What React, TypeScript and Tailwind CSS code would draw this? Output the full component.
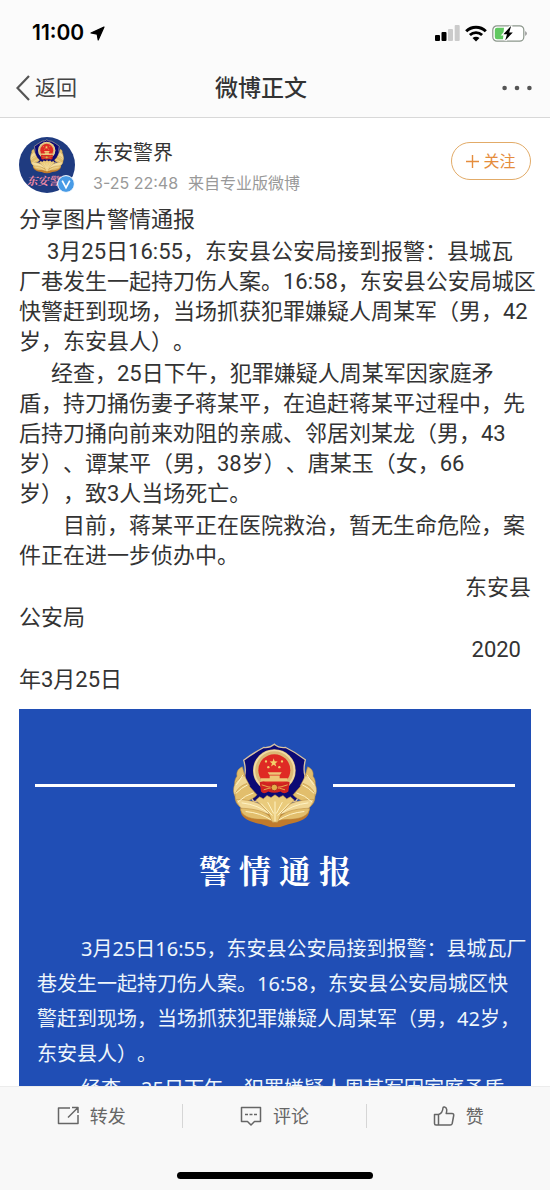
import type { ReactNode } from "react";

// ──────────────────────────────────────────────────────────────
// EMBLEM
// ──────────────────────────────────────────────────────────────
const LEAVES = [
  "M102 142 C88 148 84 158 86 170 C78 180 76 196 84 208 C92 194 106 184 110 170 Z",
  "M108 168 C92 174 78 190 76 206 C74 218 78 228 84 236 C98 218 118 216 124 198 Z",
  "M116 192 C96 198 80 214 80 232 C80 246 86 256 96 262 C110 244 136 240 146 226 Z",
  "M84 240 C90 264 106 276 132 280 C152 284 176 276 190 290 C178 254 132 240 84 240 Z",
  "M96 266 C98 284 114 294 138 298 C160 302 184 296 196 310 C186 276 142 268 96 266 Z",
];

function Wreath() {
  return (
    <g stroke="#b98a3c" strokeWidth="1.6" strokeLinejoin="round">
      {LEAVES.map((d, i) => (
        <path key={d} d={d} fill={i % 2 ? "#f0d694" : "#e2be6c"} />
      ))}
      <path d="M84 196 Q96 180 104 166 M82 222 Q100 204 118 196 M88 248 Q112 226 136 220 M100 250 Q150 256 184 284 M112 276 Q156 280 190 302" fill="none" stroke="#fff3c4" strokeWidth="3" />
    </g>
  );
}

function PoliceEmblem({ className }: { className: string }) {
  return (
    <svg viewBox="74 68 252 260" className={className} aria-hidden="true">
      <path d="M97 268 Q200 300 303 268 C306 296 276 308 240 314 Q200 332 160 314 C124 308 94 296 97 268 Z" fill="#c07a2c" />
      <path
        d="M198 74 Q212 86 232 84 Q262 98 291 121 Q284 150 290 168 Q286 216 262 246 L136 246 Q110 208 109 168 Q114 148 106 122 Q136 100 166 84 Q184 86 198 74 Z"
        fill="#0b0a75"
        stroke="#d9c3a0"
        strokeWidth="4"
      />
      <circle cx="198" cy="153" r="64" fill="#dcb974" />
      <circle cx="198" cy="153" r="60" fill="none" stroke="#f1dba6" strokeWidth="5" />
      <circle cx="198" cy="152" r="48" fill="#df2a24" />
      <path d="M196 116 l3 9 9 1 -7 6 3 9 -8 -5 -8 5 3 -9 -7 -6 9 -1 Z" fill="#f3cf6a" />
      <g fill="#f3cf6a">
        <circle cx="173" cy="126" r="3.5" />
        <circle cx="180" cy="143" r="3.5" />
        <circle cx="213" cy="143" r="3.5" />
        <circle cx="221" cy="126" r="3.5" />
      </g>
      <path d="M178 158 h42 l-5 8 h-32 Z M184 168 h30 v8 h24 v10 h-80 v-10 h26 Z" fill="#edc877" />
      <path d="M154 188 Q168 182 176 192 Q198 186 222 192 Q232 182 244 188 L240 216 Q228 226 216 216 Q198 224 180 216 Q166 226 158 216 Z" fill="#d02321" />
      <path d="M160 196 Q198 212 238 196 M166 211 Q198 198 230 211" fill="none" stroke="#e8a94e" strokeWidth="3" />
      <circle cx="198" cy="204" r="10" fill="#e2ad4a" stroke="#b02a1c" strokeWidth="3" />
      <Wreath />
      <g transform="translate(400 0) scale(-1 1)">
        <Wreath />
      </g>
      <path
        d="M142 242 l12 -10 11 6 11 -10 12 6 12 -8 12 8 12 -6 11 10 11 -6 12 10 L220 278 L208 308 H192 L180 278 Z"
        fill="#eacb7c"
        stroke="#b98a3c"
        strokeWidth="1.6"
      />
      <path d="M158 252 L192 288 M178 248 L196 282 M242 252 L208 288 M222 248 L204 282 M200 246 V306" stroke="#fff3c4" strokeWidth="3" />
    </svg>
  );
}

// ──────────────────────────────────────────────────────────────
// HEADER
// ──────────────────────────────────────────────────────────────
function StatusBar() {
  return (
    <div className="flex h-[58px] items-center justify-between pt-2 pr-[22px] pl-8">
      <div className="flex items-center gap-1.5 text-[21px] font-semibold text-black">
        <span>11:00</span>
        <svg viewBox="0 0 15 15" className="size-[15px]" aria-hidden="true">
          <path d="M14 1 L1 7 L7.2 8.2 L8.2 14 Z" fill="#000" stroke="#000" strokeWidth="1.2" strokeLinejoin="round" />
        </svg>
      </div>
      <div className="flex items-center gap-[5px]">
        <svg viewBox="0 0 25 16" className="h-4 w-[25px]" aria-hidden="true">
          <rect x="0" y="10" width="5" height="6" rx="1" fill="#000" />
          <rect x="6.5" y="7" width="5" height="9" rx="1" fill="#000" />
          <rect x="13" y="4" width="5" height="12" rx="1" fill="#cbcbcb" />
          <rect x="19.7" y="0" width="5" height="16" rx="1" fill="#cbcbcb" />
        </svg>
        <svg viewBox="0 0 22 17" className="h-[17px] w-[22px]" aria-hidden="true">
          <path d="M1.2 6.3 A14 14 0 0 1 20.8 6.3" fill="none" stroke="#000" strokeWidth="3" />
          <path d="M4.9 10 A8.8 8.8 0 0 1 17.1 10" fill="none" stroke="#000" strokeWidth="2.8" />
          <path d="M11 16.6 L7.5 13.1 A5 5 0 0 1 14.5 13.1 Z" fill="#000" />
        </svg>
        <svg viewBox="0 0 36 17" className="h-[17px] w-9" aria-hidden="true">
          <rect x="0.8" y="0.8" width="31" height="15.4" rx="4.2" fill="#fff" stroke="#8b968b" strokeWidth="1.2" />
          <path d="M5 2.8 H12 L11 14.2 H5 Q2.8 14.2 2.8 12 V5 Q2.8 2.8 5 2.8 Z" fill="#60c860" />
          <path d="M18.4 1.6 L11.4 9.3 H15 L13.2 15.4 L20.8 7.6 H17.2 L19 1.6 Z" fill="#000" stroke="#fff" strokeWidth="2.4" paintOrder="stroke" />
          <path d="M33.4 6 Q36 8.5 33.4 11 Z" fill="#777" />
        </svg>
      </div>
    </div>
  );
}

function NavBar() {
  return (
    <nav className="grid h-[59px] grid-cols-3 items-center pr-[18px] pl-4">
      <button type="button" className="flex items-center gap-[5px] justify-self-start text-[21px] text-[#444]">
        <svg viewBox="0 0 14 26" className="h-[26px] w-3.5" aria-hidden="true">
          <path d="M13 1 L1.5 13 L13 25" fill="none" stroke="#555" strokeWidth="2.2" />
        </svg>
        返回
      </button>
      <h1 className="pt-0.5 pr-[26px] text-center text-[23px] font-medium text-[#333]">微博正文</h1>
      <button type="button" aria-label="更多" className="justify-self-end">
        <svg viewBox="0 0 30 6" className="h-1.5 w-[30px]" aria-hidden="true">
          <circle cx="2.6" cy="3" r="2.3" fill="#555" />
          <circle cx="15" cy="3" r="2.3" fill="#555" />
          <circle cx="27.4" cy="3" r="2.3" fill="#555" />
        </svg>
      </button>
    </nav>
  );
}

// ──────────────────────────────────────────────────────────────
// POST
// ──────────────────────────────────────────────────────────────
function Author() {
  return (
    <div className="flex items-start">
      <div className="relative size-14 shrink-0">
        <div className="flex size-14 flex-col items-center overflow-hidden rounded-full bg-[#1f3b80] pt-0.5">
          <PoliceEmblem className="h-[35px] w-[34px] shrink-0" />
          <span className="pr-2 font-['Liberation_Serif','Noto_Serif_CJK_SC',serif] text-[11px] leading-[14px] font-bold text-[#ee8aa6] italic">
            东安警
          </span>
        </div>
        <svg viewBox="0 0 18 18" className="absolute right-0 bottom-0 size-[18px]" aria-hidden="true">
          <circle cx="9" cy="9" r="8.4" fill="#489be6" stroke="#fff" strokeWidth="1" />
          <path d="M5.2 5.6 L9 12.6 L12.8 5.6" fill="none" stroke="#fff" strokeWidth="1.7" />
        </svg>
      </div>
      <div className="ml-[18px] flex-1">
        <a href="#" className="block text-[20px] leading-8 text-[#333]">东安警界</a>
        <p className="flex gap-2.5 text-[16px] leading-7 text-[#999]">
          <span>3-25 22:48</span>
          <span>来自专业版微博</span>
        </p>
      </div>
      <button
        type="button"
        className="mt-[5px] flex h-[38px] w-20 items-center justify-center gap-1 rounded-full border border-[#e2ab68] text-[16px] text-[#e58d3d]"
      >
        <svg viewBox="0 0 13 13" className="size-[13px]" aria-hidden="true">
          <path d="M6.5 0 V13 M0 6.5 H13" stroke="#e58d3d" strokeWidth="1.4" />
        </svg>
        关注
      </button>
    </div>
  );
}

function PostText() {
  return (
    <div className="mt-2 flex flex-col gap-0.5 font-['Roboto','Noto_Sans_CJK_SC',sans-serif] text-[22px] leading-[30px] whitespace-nowrap text-[#333] [text-spacing-trim:space-all]">
      <p>分享图片警情通报</p>
      <p className="indent-7">
        3月25日16:55，东安县公安局接到报警：县城瓦<br />
        厂巷发生一起持刀伤人案。16:58，东安县公安局城区<br />
        快警赶到现场，当场抓获犯罪嫌疑人周某军（男，42<br />
        岁，东安县人）。
      </p>
      <p className="indent-8">
        经查，25日下午，犯罪嫌疑人周某军因家庭矛<br />
        盾，持刀捅伤妻子蒋某平，在追赶蒋某平过程中，先<br />
        后持刀捅向前来劝阻的亲戚、邻居刘某龙（男，43<br />
        岁）、谭某平（男，38岁）、唐某玉（女，66<br />
        岁），致3人当场死亡。
      </p>
      <p className="indent-11">
        目前，蒋某平正在医院救治，暂无生命危险，案<br />
        件正在进一步侦办中。
      </p>
      <p>
        <span className="block text-right">东安县</span>
        公安局
      </p>
      <p>
        <span className="block pr-2.5 text-right">2020</span>
        年3月25日
      </p>
    </div>
  );
}

function Notice() {
  return (
    <figure className="mt-3.5 bg-[#204eb5] px-4 pt-[33px] font-['Noto_Sans','Noto_Sans_CJK_SC',sans-serif] text-[#eef6fb] [text-spacing-trim:space-all]">
      <div className="flex items-center gap-4">
        <div className="h-[3px] flex-1 bg-white" />
        <PoliceEmblem className="h-[87px] w-[84px]" />
        <div className="h-[3px] flex-1 bg-white" />
      </div>
      <h2 className="mt-5 text-center font-['Liberation_Serif','Noto_Serif_CJK_SC','Noto_Sans_CJK_SC',serif] text-[32px] leading-[46px] font-bold text-white">
        警 情 通 报
      </h2>
      <div className="mt-9 pl-0.5 text-[20px] leading-[35px] whitespace-nowrap">
        <p className="indent-11">
          3月25日16:55，东安县公安局接到报警：县城瓦厂<br />
          巷发生一起持刀伤人案。16:58，东安县公安局城区快<br />
          警赶到现场，当场抓获犯罪嫌疑人周某军（男，42岁，<br />
          东安县人）。
        </p>
        <p className="indent-11">经查，25日下午，犯罪嫌疑人周某军因家庭矛盾，</p>
      </div>
    </figure>
  );
}

// ──────────────────────────────────────────────────────────────
// BOTTOM BAR
// ──────────────────────────────────────────────────────────────
const ACTIONS: { label: string; icon: ReactNode }[] = [
  {
    label: "转发",
    icon: <path d="M13 2 H1.5 V17.5 H21 V9 M11 11.5 L20.5 2 M15 1.5 H21 V7" />,
  },
  {
    label: "评论",
    icon: (
      <>
        <path d="M1.5 1.5 H20.5 V15.5 H14.5 L11 19 L7.5 15.5 H1.5 Z" />
        <path d="M5 8.5 H8 M9.5 8.5 H12.5 M14 8.5 H17" />
      </>
    ),
  },
  {
    label: "赞",
    icon: (
      <path d="M1.5 8.5 H5.5 V19 H3 Q1.5 19 1.5 17.5 Z M5.5 8.5 C9 7.5 9.8 5 10 1.8 Q10.2 0.8 11.5 1 C14.2 1.6 14 4.5 13.2 7.5 H19 Q21 7.5 20.7 9.5 L19.2 17.5 Q18.8 19 17.2 19 H5.5" />
    ),
  },
];

function ActionBar() {
  return (
    <footer className="shrink-0 border-t border-[#ececec] bg-[#f8f8f8] pb-[11px]">
      <div className="grid grid-cols-3 divide-x divide-[#d6d6d6] py-[17px]">
        {ACTIONS.map((a) => (
          <button key={a.label} type="button" className="flex h-6 items-center justify-center gap-[11px] text-[18px] text-[#666]">
            <svg viewBox="0 0 22 20" className="h-5 w-[22px]" fill="none" stroke="#666" strokeWidth="1.5" strokeLinejoin="round" aria-hidden="true">
              {a.icon}
            </svg>
            {a.label}
          </button>
        ))}
      </div>
      <div className="mx-auto mt-[27px] h-[7px] w-[196px] rounded-full bg-black" />
    </footer>
  );
}

export default function App() {
  return (
    <div className="flex h-screen flex-col overflow-hidden bg-white font-['Inter','Noto_Sans_CJK_SC',sans-serif]">
      <header className="shrink-0 border-b border-[#d8d8d8] bg-[#fbfbfb]">
        <StatusBar />
        <NavBar />
      </header>
      <main className="min-h-0 flex-1 overflow-hidden px-[19px] pt-[19px]">
        <Author />
        <PostText />
        <Notice />
      </main>
      <ActionBar />
    </div>
  );
}
